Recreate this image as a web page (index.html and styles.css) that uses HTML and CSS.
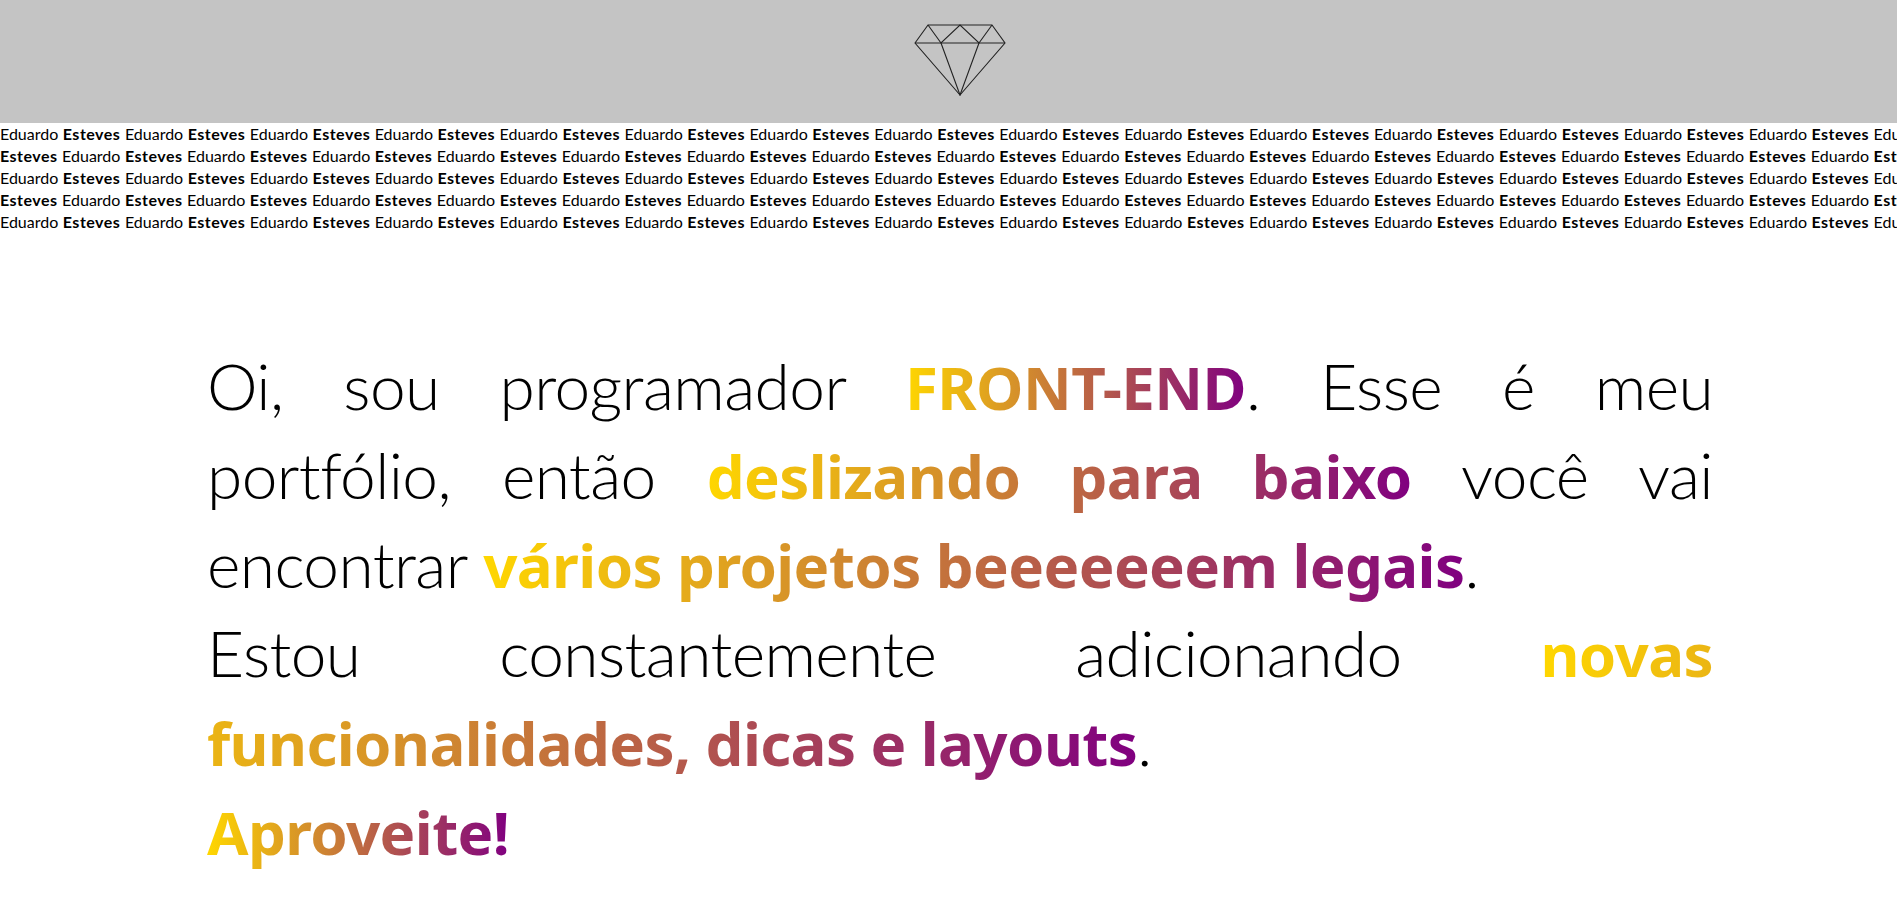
FILE: index.html
```html
<!DOCTYPE html><html lang='en'>
	<head>
		<meta charset='utf-8'>
		<title>Eduardo Esteves</title>
		<link rel="stylesheet" href="styles.css">
	</head>
	<body>
		<header class='topBar'>
			<!-- diamond logo -->
			<svg class='logo' width='92' height='72' viewBox='0 0 92 72' fill='none' stroke='#222' stroke-width='1.1'>
				<path d='M1 19L14 1H78L91 19L46 71Z'/>
				<path d='M1 19H91'/>
				<path d='M14 1L27 19L46 1L65 19L78 1'/>
				<path d='M27 19L46 71L65 19'/>
			</svg>
		</header>
		<!-- name strip -->
		<div class='nameStrip'>
			<div class='nameRow'>Eduardo <b>Esteves</b> Eduardo <b>Esteves</b> Eduardo <b>Esteves</b> Eduardo <b>Esteves</b> Eduardo <b>Esteves</b> Eduardo <b>Esteves</b> Eduardo <b>Esteves</b> Eduardo <b>Esteves</b> Eduardo <b>Esteves</b> Eduardo <b>Esteves</b> Eduardo <b>Esteves</b> Eduardo <b>Esteves</b> Eduardo <b>Esteves</b> Eduardo <b>Esteves</b> Eduardo <b>Esteves</b> Eduardo <b>Esteves</b></div>
			<div class='nameRow'><b>Esteves</b> Eduardo <b>Esteves</b> Eduardo <b>Esteves</b> Eduardo <b>Esteves</b> Eduardo <b>Esteves</b> Eduardo <b>Esteves</b> Eduardo <b>Esteves</b> Eduardo <b>Esteves</b> Eduardo <b>Esteves</b> Eduardo <b>Esteves</b> Eduardo <b>Esteves</b> Eduardo <b>Esteves</b> Eduardo <b>Esteves</b> Eduardo <b>Esteves</b> Eduardo <b>Esteves</b> Eduardo <b>Esteves</b> Eduardo</div>
			<div class='nameRow'>Eduardo <b>Esteves</b> Eduardo <b>Esteves</b> Eduardo <b>Esteves</b> Eduardo <b>Esteves</b> Eduardo <b>Esteves</b> Eduardo <b>Esteves</b> Eduardo <b>Esteves</b> Eduardo <b>Esteves</b> Eduardo <b>Esteves</b> Eduardo <b>Esteves</b> Eduardo <b>Esteves</b> Eduardo <b>Esteves</b> Eduardo <b>Esteves</b> Eduardo <b>Esteves</b> Eduardo <b>Esteves</b> Eduardo <b>Esteves</b></div>
			<div class='nameRow'><b>Esteves</b> Eduardo <b>Esteves</b> Eduardo <b>Esteves</b> Eduardo <b>Esteves</b> Eduardo <b>Esteves</b> Eduardo <b>Esteves</b> Eduardo <b>Esteves</b> Eduardo <b>Esteves</b> Eduardo <b>Esteves</b> Eduardo <b>Esteves</b> Eduardo <b>Esteves</b> Eduardo <b>Esteves</b> Eduardo <b>Esteves</b> Eduardo <b>Esteves</b> Eduardo <b>Esteves</b> Eduardo <b>Esteves</b> Eduardo</div>
			<div class='nameRow'>Eduardo <b>Esteves</b> Eduardo <b>Esteves</b> Eduardo <b>Esteves</b> Eduardo <b>Esteves</b> Eduardo <b>Esteves</b> Eduardo <b>Esteves</b> Eduardo <b>Esteves</b> Eduardo <b>Esteves</b> Eduardo <b>Esteves</b> Eduardo <b>Esteves</b> Eduardo <b>Esteves</b> Eduardo <b>Esteves</b> Eduardo <b>Esteves</b> Eduardo <b>Esteves</b> Eduardo <b>Esteves</b> Eduardo <b>Esteves</b></div>
		</div>
		<main class='intro'>
			<p>Oi, sou programador <span class='grad'>FRONT-END</span>. Esse é meu portfólio, então <span class='grad'>deslizando para baixo</span> você vai encontrar <span class='grad'>vários projetos beeeeeeem legais</span>.<br>
			Estou constantemente adicionando <span class='grad'>novas funcionalidades, dicas e layouts</span>.<br>
			<span class='grad'>Aproveite!</span></p>
		</main>
	</body>
</html>
```
FILE: styles.css
```css
html,body{
	margin:0;
	padding:0;
	background:#fff;
	color:#000;
	font-family:"Lato","Noto Sans",sans-serif;
	overflow:hidden;
}
.topBar{
	height:123px;
	background:#c4c4c4;
	display:flex;
	justify-content:center;
	padding:24px 0 0 22px;
	box-sizing:border-box;
}
.logo{
	display:block;
}
.nameStrip{
	overflow:hidden;
}
.nameRow{
	white-space:nowrap;
	font-size:16px;
	line-height:22px;
	font-weight:400;
	word-spacing:0.4px;
}
.nameRow b{
	font-weight:700;
	letter-spacing:0.5px;
}
.intro{
	padding:0 184px 0 207px;
	margin-top:109px;
}
.intro p{
	margin:0;
	font-size:64px;
	line-height:88px;
	font-weight:300;
	letter-spacing:-0.6px;
	text-align:justify;
}
.grad{
	font-family:"Noto Sans",sans-serif;
	font-size:60px;
	font-weight:700;
	letter-spacing:-0.6px;
	background:linear-gradient(90deg,#ffd700,#800080);
	-webkit-background-clip:text;
	background-clip:text;
	color:transparent;
}
```
